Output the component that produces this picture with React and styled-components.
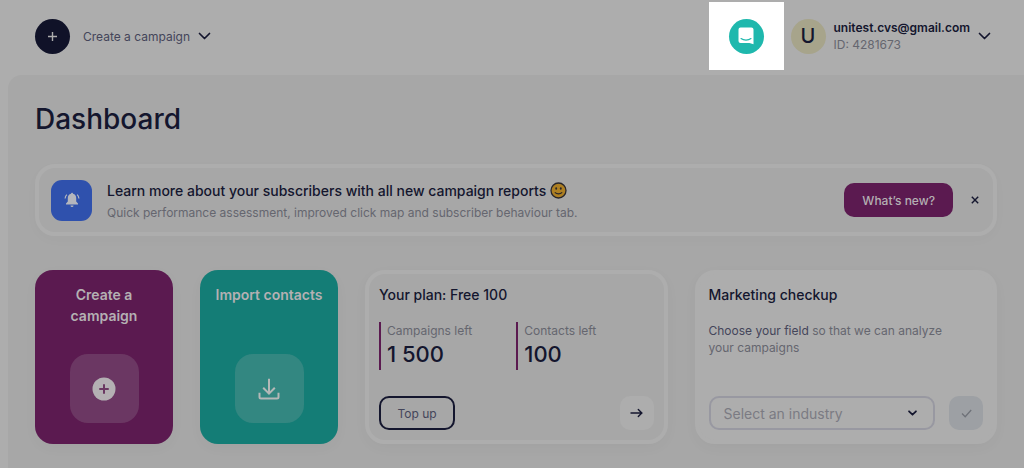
import React from 'react';
import styled, { createGlobalStyle } from 'styled-components';

const colors = {
    page: '#adadad',
    panel: '#a7a7a7',
    navy: '#14162e',
    slate: '#44455a',
    grey: '#65666f',
    plum: '#5b1a50',
    teal: '#147d76',
    light: '#b4b0b3',
};

const GlobalStyle = createGlobalStyle`
    * {
        box-sizing: border-box;
    }

    body {
        margin: 0;
        background: ${colors.page};
        color: ${colors.navy};
        font-family: Inter, 'Liberation Sans', sans-serif;
        font-size: 12px;
        line-height: 17px;
    }

    button,
    select {
        font: inherit;
        color: inherit;
        border: none;
        background: none;
        padding: 0;
    }

    svg {
        display: block;
    }
`;

const Page = styled.div`
    min-height: 100vh;
    display: flex;
    flex-direction: column;
`;

const Header = styled.header`
    display: flex;
    align-items: center;
    justify-content: space-between;
    height: 75px;
    padding: 0 33px 3px 35px;
`;

const HeaderSide = styled.div`
    display: flex;
    align-items: center;
`;

const CreateMenu = styled.button`
    display: flex;
    align-items: center;
    gap: 8px;
    color: ${colors.slate};
`;

const Round = styled.span`
    display: flex;
    align-items: center;
    justify-content: center;
    width: 35px;
    height: 35px;
    border-radius: 50%;
    background: ${props => props.$bg};
    font-size: 20px;
    font-weight: 500;
`;

const MenuLabel = styled.span`
    margin-left: 5px;
    font-size: 12px;
`;

const ChatButton = styled.button`
    display: flex;
    align-items: center;
    justify-content: center;
    width: 75px;
    height: 68px;
    margin-right: 7px;
    background: #fff;
`;

const Account = styled.button`
    display: flex;
    align-items: center;
    gap: 8px;
    text-align: left;
`;

const Email = styled.div`
    font-weight: 600;
`;

const Muted = styled.div`
    color: ${colors.grey};
`;

const Panel = styled.main`
    flex: 1;
    margin-left: 8px;
    padding: 27px;
    background: ${colors.panel};
    border-top-left-radius: 14px;
`;

const Title = styled.h1`
    margin: 0 0 28px;
    font-size: 28px;
    line-height: 34px;
    font-weight: 500;
`;

const Banner = styled.section`
    display: flex;
    align-items: center;
    height: 72px;
    margin-bottom: 34px;
    padding: 0 12px;
    border: 4px solid ${colors.page};
    border-radius: 20px;
    box-shadow: 0 4px 14px rgba(0, 0, 0, 0.02);
`;

const BannerIcon = styled.div`
    display: flex;
    align-items: center;
    justify-content: center;
    width: 41px;
    height: 41px;
    margin-right: 15px;
    border-radius: 11px;
    background: #2f51ad;
`;

const BannerText = styled.div`
    display: grid;
    flex: 1;
    gap: 3px;
`;

const CardTitle = styled.h2`
    display: flex;
    align-items: center;
    gap: 4px;
    margin: 0;
    font-size: 14px;
    line-height: 21px;
    font-weight: 500;
`;

const NewsButton = styled.button`
    height: 34px;
    padding: 0 18px;
    border-radius: 10px;
    background: ${colors.plum};
    color: ${colors.light};
    font-weight: 500;
`;

const CloseButton = styled.button`
    margin: 0 2px 0 18px;
`;

const Cards = styled.div`
    display: grid;
    grid-template-columns: 138px 138px 1fr 1fr;
    gap: 27px;
`;

const ActionCard = styled.button`
    display: flex;
    flex-direction: column;
    align-items: center;
    justify-content: space-between;
    height: 174px;
    padding: 14px 12px 21px;
    border-radius: 18px;
    background: ${props => props.$bg};
    color: ${colors.light};
    font-size: 14px;
    line-height: 21px;
    font-weight: 600;
    box-shadow: 0 4px 14px rgba(0, 0, 0, 0.03);
`;

const ActionIcon = styled.span`
    display: flex;
    align-items: center;
    justify-content: center;
    width: 69px;
    height: 69px;
    border-radius: 18px;
    background: rgba(173, 173, 173, 0.2);
`;

const Card = styled.section`
    display: flex;
    flex-direction: column;
    height: 174px;
    padding: 10px;
    border: 4px solid ${colors.page};
    border-radius: 20px;
    background: ${props => (props.$filled ? colors.page : 'none')};
    box-shadow: 0 4px 14px rgba(0, 0, 0, 0.03);
`;

const Stats = styled.div`
    display: grid;
    grid-template-columns: 1fr 1fr;
    margin-top: 17px;
`;

const Stat = styled.div`
    height: 48px;
    padding-left: 6px;
    border-left: 2px solid ${colors.plum};
`;

const StatValue = styled.div`
    font-size: 22px;
    line-height: 30px;
    font-weight: 500;
`;

const CardFooter = styled.div`
    display: flex;
    align-items: center;
    justify-content: space-between;
    gap: 14px;
    margin-top: auto;
`;

const TopUp = styled.button`
    width: 76px;
    height: 34px;
    border: 2px solid ${colors.navy};
    border-radius: 10px;
    color: ${colors.slate};
`;

const SquareButton = styled.button`
    display: flex;
    align-items: center;
    justify-content: center;
    flex: none;
    width: 34px;
    height: 34px;
    border-radius: 10px;
    background: ${props => props.$bg};
`;

const Hint = styled.p`
    max-width: 250px;
    margin: 17px 0 0;
    color: ${colors.grey};
`;

const HintStrong = styled.span`
    color: ${colors.slate};
`;

const SelectWrap = styled.label`
    display: grid;
    flex: 1;
    align-items: center;

    > * {
        grid-area: 1 / 1;
    }

    svg {
        justify-self: end;
        margin-right: 18px;
        pointer-events: none;
    }
`;

const Select = styled.select`
    appearance: none;
    width: 100%;
    height: 34px;
    padding: 0 13px;
    border: 2px solid #9898a1;
    border-radius: 10px;
    color: #7b7b83;
    font-size: 14px;
`;

const Chevron = ({ width = 13, height = 8, strokeWidth = 1.7 }) => (
    <svg width={width} height={height} viewBox="0 0 13 8" fill="none">
        <path
            d="M1.5 1.5l5 5 5-5"
            stroke={colors.navy}
            strokeWidth={strokeWidth}
            strokeLinecap="round"
            strokeLinejoin="round"
        />
    </svg>
);

const PlusIcon = () => (
    <svg width="9" height="9" viewBox="0 0 9 9">
        <path d="M4.5 0v9M0 4.5h9" stroke="#adadad" strokeWidth="1.4" />
    </svg>
);

const ChatIcon = () => (
    <svg width="16" height="18" viewBox="0 0 16 18" fill="none">
        <path
            d="M2.5.5h10.9A2.1 2.1 0 0 1 15.5 2.6v14.7l-4-1.3h-9A2 2 0 0 1 .5 14V2.5a2 2 0 0 1 2-2z"
            fill="#fff"
        />
        <path
            d="M3 11.500c2.800 2.100 7.200 2.100 10 0"
            stroke="#1fb8ad"
            strokeWidth="1.100"
            strokeLinecap="round"
        />
    </svg>
);

const BellIcon = () => (
    <svg width="16" height="16" viewBox="0 0 16 16" fill="none">
        <path
            d="M8 .8c.6 0 1 .4 1 .9 2 .5 3.200 2.200 3.200 4.300v3.500l1.800 2v1H2v-1l1.800-2V6c0-2.100 1.200-3.800 3.200-4.300 0-.5.400-.9 1-.9z"
            fill="#b4b6bd"
        />
        <path d="M6.500 13.600h3a1.500 1.500 0 0 1-3 0z" fill="#b4b6bd" />
        <path
            d="M2.800 2.600C1.700 3.700 1.200 5 1.100 6.500M13.200 2.600c1.100 1.100 1.600 2.400 1.700 3.900"
            stroke="#b4b6bd"
            strokeWidth="1.200"
        />
    </svg>
);

const SmileIcon = () => (
    <svg width="17" height="17" viewBox="0 0 17 17" fill="none">
        <circle cx="8.500" cy="8.500" r="7.500" fill="#ad7f22" stroke="#29262a" strokeWidth="1.300" />
        <ellipse cx="6.200" cy="6.500" rx=".9" ry="1.200" fill="#29262a" />
        <ellipse cx="10.800" cy="6.500" rx=".9" ry="1.200" fill="#29262a" />
        <path
            d="M5.200 10.600c1.600 1.600 5 1.600 6.600 0"
            stroke="#29262a"
            strokeWidth="1.200"
            strokeLinecap="round"
        />
    </svg>
);

const CloseIcon = () => (
    <svg width="8" height="8" viewBox="0 0 8 8">
        <path d="M.8.8l6.400 6.400M7.200.8L.8 7.200" stroke={colors.navy} strokeWidth="1.400" />
    </svg>
);

const CirclePlusIcon = () => (
    <svg width="24" height="24" viewBox="0 0 24 24">
        <circle cx="12" cy="12" r="11.500" fill="#b4b0b3" />
        <path
            d="M12 8v8M8 12h8"
            stroke="#6b3862"
            strokeWidth="2"
            strokeLinecap="round"
        />
    </svg>
);

const DownloadIcon = () => (
    <svg width="22" height="22" viewBox="0 0 22 22" fill="none">
        <path
            d="M11 .8v14.500M5.200 9.800l5.800 5.800 5.800-5.800M1.500 14.800v4.200a1.500 1.500 0 0 0 1.500 1.500h16a1.500 1.500 0 0 0 1.500-1.500v-4.200"
            stroke="#b4b8b7"
            strokeWidth="2"
        />
    </svg>
);

const ArrowIcon = () => (
    <svg width="13" height="10" viewBox="0 0 13 10" fill="none">
        <path
            d="M1 5h11M8.300 1.500L11.800 5 8.300 8.500"
            stroke={colors.navy}
            strokeWidth="1.400"
            strokeLinecap="round"
        />
    </svg>
);

const CheckIcon = () => (
    <svg width="11" height="9" viewBox="0 0 11 9" fill="none">
        <path d="M1 4.500l3.200 3.200L10.200 1" stroke="#6f7279" strokeWidth="1.300" />
    </svg>
);

const stats = [
    { label: 'Campaigns left', value: '1 500' },
    { label: 'Contacts left', value: '100' },
];

const TopBar = () => (
    <Header>
        <CreateMenu>
            <Round $bg="#101228">
                <PlusIcon />
            </Round>
            <MenuLabel>Create a campaign</MenuLabel>
            <Chevron />
        </CreateMenu>
        <HeaderSide>
            <ChatButton aria-label="Open chat">
                <Round $bg="#1fb8ad">
                    <ChatIcon />
                </Round>
            </ChatButton>
            <Account>
                <Round $bg="#a7a48b">U</Round>
                <div>
                    <Email>unitest.cvs@gmail.com</Email>
                    <Muted>ID: 4281673</Muted>
                </div>
                <Chevron />
            </Account>
        </HeaderSide>
    </Header>
);

const NewsBanner = () => (
    <Banner>
        <BannerIcon>
            <BellIcon />
        </BannerIcon>
        <BannerText>
            <CardTitle>
                Learn more about your subscribers with all new campaign reports
                <SmileIcon />
            </CardTitle>
            <Muted>
                Quick performance assessment, improved click map and subscriber
                behaviour tab.
            </Muted>
        </BannerText>
        <NewsButton>What’s new?</NewsButton>
        <CloseButton aria-label="Close">
            <CloseIcon />
        </CloseButton>
    </Banner>
);

const PlanCard = () => (
    <Card>
        <CardTitle>Your plan: Free 100</CardTitle>
        <Stats>
            {stats.map(s => (
                <Stat key={s.label}>
                    <Muted>{s.label}</Muted>
                    <StatValue>{s.value}</StatValue>
                </Stat>
            ))}
        </Stats>
        <CardFooter>
            <TopUp>Top up</TopUp>
            <SquareButton $bg={colors.page} aria-label="Plan details">
                <ArrowIcon />
            </SquareButton>
        </CardFooter>
    </Card>
);

const CheckupCard = () => (
    <Card $filled>
        <CardTitle>Marketing checkup</CardTitle>
        <Hint>
            <HintStrong>Choose your field</HintStrong> so that we can analyze
            your campaigns
        </Hint>
        <CardFooter>
            <SelectWrap>
                <Select aria-label="Industry" defaultValue="">
                    <option value="">Select an industry</option>
                </Select>
                <Chevron width={9} height={6} strokeWidth={2.5} />
            </SelectWrap>
            <SquareButton $bg="#9da0a4" aria-label="Confirm" disabled>
                <CheckIcon />
            </SquareButton>
        </CardFooter>
    </Card>
);

const App = () => (
    <>
        <GlobalStyle />
        <Page>
            <TopBar />
            <Panel>
                <Title>Dashboard</Title>
                <NewsBanner />
                <Cards>
                    <ActionCard $bg={colors.plum}>
                        Create a campaign
                        <ActionIcon>
                            <CirclePlusIcon />
                        </ActionIcon>
                    </ActionCard>
                    <ActionCard $bg={colors.teal}>
                        Import contacts
                        <ActionIcon>
                            <DownloadIcon />
                        </ActionIcon>
                    </ActionCard>
                    <PlanCard />
                    <CheckupCard />
                </Cards>
            </Panel>
        </Page>
    </>
);

export default App;
